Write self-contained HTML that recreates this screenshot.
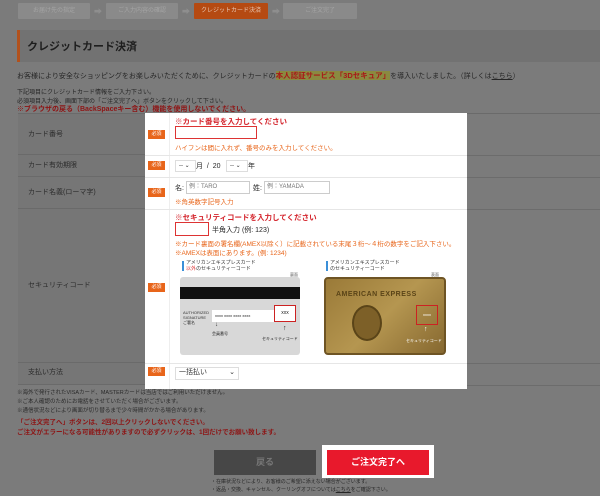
<!DOCTYPE html>
<html><head><meta charset="utf-8"><style>
*{margin:0;padding:0;box-sizing:border-box}
body{width:600px;height:496px;background:#7b7b7b;font-family:"Liberation Sans","Noto Sans CJK JP",sans-serif;position:relative;overflow:hidden;color:#222}
.a{position:absolute;white-space:nowrap}
.step{position:absolute;top:3px;height:16px;background:#8a8a8a;color:#a5a5a5;font-size:6px;text-align:center;line-height:16px;border-radius:1px}
.arr{position:absolute;top:6px;color:#8e8e8e;font-size:8px}
.t{font-size:7px;color:#262626}
.lab{position:absolute;left:18px;width:127px;background:#767676;color:#2b2b2b;font-size:7px;padding-left:10px;border-bottom:1px solid #6a6a6a}
.must{position:absolute;left:148px;width:17px;height:9px;background:#e8651a;color:#fff;font-size:5px;text-align:center;line-height:9px}
.r{color:#e8651a;font-size:6.5px}
.red{color:#d4242c;font-weight:bold;font-size:7.5px}
.inp{position:absolute;border:1px solid #ccc;background:#fff;height:13px;font-size:6px;color:#777;padding-left:2px;line-height:11px}
.sel{position:absolute;border:1px solid #ddd;background:#fff;height:12px;font-size:6px;line-height:10px;padding-left:3px;color:#333}
</style></head><body>
<div class="step" style="left:18px;width:72px">お届け先の指定</div>
<div class="arr" style="left:94px">➡</div>
<div class="step" style="left:106px;width:72px">ご入力内容の確認</div>
<div class="arr" style="left:182px">➡</div>
<div class="step" style="left:194px;width:74px;background:#b54a12;color:#e8c8b4">クレジットカード決済</div>
<div class="arr" style="left:272px">➡</div>
<div class="step" style="left:283px;width:74px">ご注文完了</div>

<div class="a" style="left:17px;top:30px;width:583px;height:32px;background:#727272;border-left:3px solid #b2511c"></div>
<div class="a" style="left:27px;top:38px;font-size:11px;color:#1e1e1e;font-weight:bold">クレジットカード決済</div>
<div class="a t" style="left:17px;top:70px">お客様により安全なショッピングをお楽しみいただくために、クレジットカードの<span style="color:#a81818;font-weight:bold;background:#8a8a40;font-size:7.5px">本人認証サービス「3Dセキュア」</span>を導入いたしました。（詳しくは<u>こちら</u>）</div>
<div class="a t" style="left:17px;top:87px;font-size:6px">下記項目にクレジットカード情報をご入力下さい。</div>
<div class="a t" style="left:17px;top:96px;font-size:6px">必須項目入力後、画面下部の「ご注文完了へ」ボタンをクリックして下さい。</div>
<div class="a" style="left:17px;top:104px;font-size:7px;color:#8e1414;font-weight:bold">※ブラウザの戻る（BackSpaceキー含む）機能を使用しないでください。</div>

<div class="a" style="left:18px;top:113px;width:582px;height:276px;border-top:1px solid #6a6a6a"></div>
<div class="lab" style="top:113px;height:42px;line-height:42px;border-top:1px solid #6a6a6a">カード番号</div>
<div class="lab" style="top:155px;height:22px;line-height:22px">カード有効期限</div>
<div class="lab" style="top:177px;height:32px;line-height:32px">カード名義(ローマ字)</div>
<div class="lab" style="top:209px;height:154px;line-height:154px">セキュリティコード</div>
<div class="lab" style="top:363px;height:22px;line-height:20px">支払い方法</div>
<div class="a" style="left:467px;top:155px;width:133px;border-top:1px solid #6c6c6c"></div>
<div class="a" style="left:467px;top:177px;width:133px;border-top:1px solid #6c6c6c"></div>
<div class="a" style="left:467px;top:209px;width:133px;border-top:1px solid #6c6c6c"></div>
<div class="a" style="left:467px;top:363px;width:133px;border-top:1px solid #6c6c6c"></div>
<div class="a" style="left:467px;top:385px;width:133px;border-top:1px solid #6c6c6c"></div>

<div class="a" style="left:145px;top:113px;width:322px;height:276px;background:#fff"></div>
<div class="a" style="left:169px;top:113px;height:276px;border-left:1px solid #eee"></div>
<div class="a" style="left:145px;top:155px;width:322px;border-top:1px solid #e6e6e6"></div>
<div class="a" style="left:145px;top:177px;width:322px;border-top:1px solid #e6e6e6"></div>
<div class="a" style="left:145px;top:209px;width:322px;border-top:1px solid #e6e6e6"></div>
<div class="a" style="left:145px;top:363px;width:322px;border-top:1px solid #e6e6e6"></div>

<div class="must" style="top:130px">必須</div>
<div class="must" style="top:161px">必須</div>
<div class="must" style="top:188px">必須</div>
<div class="must" style="top:283px">必須</div>
<div class="must" style="top:367px">必須</div>

<div class="a red" style="left:175px;top:116px">※カード番号を入力してください</div>
<div class="inp" style="left:175px;top:126px;width:82px;border-color:#d33"></div>
<div class="a r" style="left:175px;top:142px">ハイフンは間に入れず、番号のみを入力してください。</div>

<div class="sel" style="left:175px;top:160px;width:21px">-- ⌄</div>
<div class="a t" style="left:196px;top:161px;font-size:7px">月 &nbsp;/ &nbsp;20</div>
<div class="sel" style="left:226px;top:160px;width:22px">-- ⌄</div>
<div class="a t" style="left:248px;top:161px;font-size:7px">年</div>

<div class="a t" style="left:175px;top:183px">名:</div>
<div class="inp" style="left:186px;top:181px;width:64px">例：TARO</div>
<div class="a t" style="left:253px;top:183px">姓:</div>
<div class="inp" style="left:264px;top:181px;width:66px">例：YAMADA</div>
<div class="a r" style="left:175px;top:196px">※角英数字記号入力</div>

<div class="a red" style="left:175px;top:212px">※セキュリティコードを入力してください</div>
<div class="inp" style="left:175px;top:222px;width:34px;height:14px;border-color:#d33"></div>
<div class="a t" style="left:212px;top:225px">半角入力 (例: 123)</div>
<div class="a r" style="left:175px;top:238px">※カード裏面の署名欄(AMEX以除く）に記載されている末尾３桁～４桁の数字をご記入下さい。</div>
<div class="a r" style="left:175px;top:247px">※AMEXは表面にあります。(例: 1234)</div>

<div class="a" style="left:182px;top:261px;height:10px;border-left:2px solid #3b8fd8"></div>
<div class="a" style="left:186px;top:260px;font-size:5px;color:#333;line-height:6px">アメリカンエキスプレスカード<br><span style="color:#d33">以外</span>のセキュリティーコード</div>
<div class="a" style="left:290px;top:272px;font-size:4px;color:#555">裏面</div>
<div class="a" style="left:180px;top:277px;width:120px;height:78px;background:#d8d8d8;border-radius:3px"></div>
<div class="a" style="left:180px;top:287px;width:120px;height:12px;background:#111"></div>
<div class="a" style="left:183px;top:310px;font-size:4px;line-height:5px;color:#333">AUTHORIZED<br>SIGNATURE<br>ご署名</div>
<div class="a" style="left:212px;top:310px;width:62px;height:12px;background:#fff;font-size:4px;line-height:12px;padding-left:3px">xxxx xxxx xxxx xxxx</div>
<div class="a" style="left:274px;top:305px;width:22px;height:17px;border:1.5px solid #c22;background:#fff;font-size:5px;text-align:center;line-height:14px">xxx</div>
<div class="a" style="left:215px;top:323px;font-size:6px;line-height:5px">↓</div>
<div class="a" style="left:212px;top:331px;font-size:4px">会員番号</div>
<div class="a" style="left:283px;top:325px;font-size:7px;font-weight:bold">↑</div>
<div class="a" style="left:262px;top:336px;font-size:4px">セキュリティコード</div>

<div class="a" style="left:326px;top:261px;height:10px;border-left:2px solid #3b8fd8"></div>
<div class="a" style="left:330px;top:260px;font-size:5px;color:#333;line-height:6px">アメリカンエキスプレスカード<br>のセキュリティーコード</div>
<div class="a" style="left:431px;top:272px;font-size:4px;color:#555">表面</div>
<div class="a" style="left:324px;top:277px;width:122px;height:78px;background:linear-gradient(135deg,#9a7a38,#b59650 50%,#866830);border-radius:4px;border:2px solid #6e5424"></div>
<div class="a" style="left:336px;top:291px;font-size:7px;color:#5a4418;font-weight:bold;letter-spacing:0.5px">AMERICAN EXPRESS</div>
<div class="a" style="left:352px;top:305px;width:30px;height:36px;border-radius:50%;background:#7d6028;border:2px solid #5a4418"></div>
<div class="a" style="left:416px;top:305px;width:22px;height:20px;border:1.5px solid #c22;color:#fff;font-size:4px;text-align:center;line-height:17px">xxxx</div>
<div class="a" style="left:424px;top:326px;font-size:7px;color:#fff;font-weight:bold">↑</div>
<div class="a" style="left:406px;top:338px;font-size:4px;color:#fff">セキュリティコード</div>

<div class="sel" style="left:175px;top:367px;width:64px;height:13px;font-size:7px">一括払い<span style="float:right;padding-right:3px">⌄</span></div>

<div class="a t" style="left:17px;top:389px;font-size:5.5px;line-height:9px;color:#2a2a2a">※海外で発行されたVISAカード、MASTERカードは当店ではご利用いただけません。<br>※ご本人確認のためにお電話をさせていただく場合がございます。<br>※通信状況などにより画面が切り替るまで少々時間がかかる場合があります。</div>
<div class="a" style="left:17px;top:418px;font-size:6.5px;line-height:10px;color:#8e1414;font-weight:bold">「ご注文完了へ」ボタンは、2回以上クリックしないでください。<br>ご注文がエラーになる可能性がありますので必ずクリックは、1回だけでお願い致します。</div>

<div class="a" style="left:214px;top:450px;width:102px;height:25px;background:#474747;color:#777;font-size:9px;text-align:center;line-height:25px;font-weight:bold">戻る</div>
<div class="a" style="left:322px;top:445px;width:112px;height:33px;background:#fff"></div>
<div class="a" style="left:327px;top:450px;width:102px;height:25px;background:#e8192c;color:#fff;font-size:9px;text-align:center;line-height:25px;font-weight:bold">ご注文完了へ</div>
<div class="a t" style="left:211px;top:478px;font-size:5px;line-height:8px">・在庫状況などにより、お客様のご希望に添えない場合がございます。<br>・返品・交換、キャンセル、クーリングオフについては<u>こちら</u>をご確認下さい。</div>
</body></html>
